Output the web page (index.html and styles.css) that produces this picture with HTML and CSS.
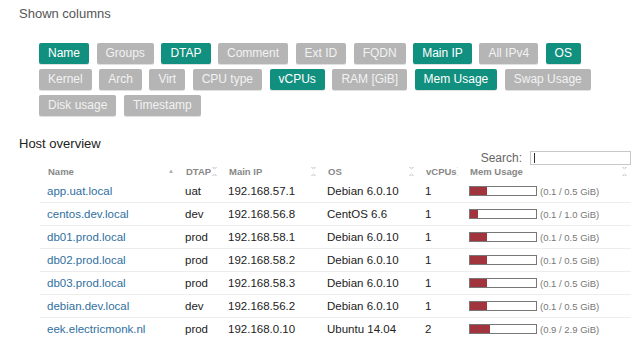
FILE: index.html
```html
<!DOCTYPE html>
<html lang="en">
<head>
    <meta charset="UTF-8">
    <title>Host overview</title>
    <link rel="stylesheet" href="styles.css">
</head>
<body>
<h2 class="section-title">Shown columns</h2>
<div class="col-toggles">
    <span class="toggle on">Name</span>
    <span class="toggle">Groups</span>
    <span class="toggle on">DTAP</span>
    <span class="toggle">Comment</span>
    <span class="toggle">Ext ID</span>
    <span class="toggle">FQDN</span>
    <span class="toggle on">Main IP</span>
    <span class="toggle">All IPv4</span>
    <span class="toggle on">OS</span>
    <span class="toggle">Kernel</span>
    <span class="toggle">Arch</span>
    <span class="toggle">Virt</span>
    <span class="toggle">CPU type</span>
    <span class="toggle on">vCPUs</span>
    <span class="toggle">RAM [GiB]</span>
    <span class="toggle on">Mem Usage</span>
    <span class="toggle">Swap Usage</span>
    <span class="toggle">Disk usage</span>
    <span class="toggle">Timestamp</span>
</div>

<h2 class="section-title host-title">Host overview</h2>
<div class="search-row">
    <label for="search">Search:</label>
    <span class="search-box"><input id="search" type="text"></span>
</div>
<table class="hosts">
    <colgroup>
        <col class="c-name">
        <col class="c-dtap">
        <col class="c-ip">
        <col class="c-os">
        <col class="c-cpu">
        <col class="c-mem">
    </colgroup>
    <thead>
        <tr>
            <th><div class="th-in">Name <span class="sort asc">&#9650;</span></div></th>
            <th><div class="th-in">DTAP <span class="sort both"></span></div></th>
            <th><div class="th-in">Main IP <span class="sort both"></span></div></th>
            <th><div class="th-in">OS <span class="sort both"></span></div></th>
            <th><div class="th-in">vCPUs <span class="sort both"></span></div></th>
            <th><div class="th-in">Mem Usage <span class="sort both"></span></div></th>
        </tr>
    </thead>
    <tbody>
        <tr>
            <td><a href="#">app.uat.local</a></td><td>uat</td><td>192.168.57.1</td><td>Debian 6.0.10</td><td>1</td>
            <td><span class="bar"><span class="fill" style="width: 25%"></span></span><span class="mem-txt">(0.1 / 0.5 GiB)</span></td>
        </tr>
        <tr>
            <td><a href="#">centos.dev.local</a></td><td>dev</td><td>192.168.56.8</td><td>CentOS 6.6</td><td>1</td>
            <td><span class="bar"><span class="fill" style="width: 12%"></span></span><span class="mem-txt">(0.1 / 1.0 GiB)</span></td>
        </tr>
        <tr>
            <td><a href="#">db01.prod.local</a></td><td>prod</td><td>192.168.58.1</td><td>Debian 6.0.10</td><td>1</td>
            <td><span class="bar"><span class="fill" style="width: 25%"></span></span><span class="mem-txt">(0.1 / 0.5 GiB)</span></td>
        </tr>
        <tr>
            <td><a href="#">db02.prod.local</a></td><td>prod</td><td>192.168.58.2</td><td>Debian 6.0.10</td><td>1</td>
            <td><span class="bar"><span class="fill" style="width: 25%"></span></span><span class="mem-txt">(0.1 / 0.5 GiB)</span></td>
        </tr>
        <tr>
            <td><a href="#">db03.prod.local</a></td><td>prod</td><td>192.168.58.3</td><td>Debian 6.0.10</td><td>1</td>
            <td><span class="bar"><span class="fill" style="width: 25%"></span></span><span class="mem-txt">(0.1 / 0.5 GiB)</span></td>
        </tr>
        <tr>
            <td><a href="#">debian.dev.local</a></td><td>dev</td><td>192.168.56.2</td><td>Debian 6.0.10</td><td>1</td>
            <td><span class="bar"><span class="fill" style="width: 25%"></span></span><span class="mem-txt">(0.1 / 0.5 GiB)</span></td>
        </tr>
        <tr>
            <td><a href="#">eek.electricmonk.nl</a></td><td>prod</td><td>192.168.0.10</td><td>Ubuntu 14.04</td><td>2</td>
            <td><span class="bar"><span class="fill" style="width: 31%"></span></span><span class="mem-txt">(0.9 / 2.9 GiB)</span></td>
        </tr>
    </tbody>
</table>
</body>
</html>
```

FILE: styles.css
```css
body {
    margin: 0;
    font-family: "Liberation Sans", Arial, sans-serif;
    color: #222;
    background: #fff;
    overflow: hidden;
}

.section-title {
    margin: 6px 0 0 19px;
    font-size: 13px;
    font-weight: normal;
    line-height: 16px;
    color: #555;
}

.host-title {
    margin-top: 21px;
    line-height: 14px;
    color: #222;
}

/* column toggle buttons */
.col-toggles {
    display: flex;
    flex-wrap: wrap;
    gap: 5px 7.5px;
    width: 570px;
    margin: 21px 0 0 39px;
}

.toggle {
    display: block;
    height: 21px;
    line-height: 21px;
    padding: 0 9px;
    font-size: 12px;
    color: #f2f2f2;
    background: #b5b5b5;
    border-radius: 2px;
    box-shadow: 0 1px 0 rgba(0, 0, 0, 0.12);
}

.toggle.on {
    color: #fff;
    background: #12907f;
}

/* search */
.search-row {
    display: flex;
    justify-content: flex-end;
    align-items: center;
    gap: 8px;
    width: 631px;
    height: 14px;
    font-size: 12px;
    color: #666;
}

.search-row label {
    line-height: 14px;
}

.search-box {
    display: block;
    position: relative;
}

.search-box input {
    display: block;
    box-sizing: border-box;
    width: 101px;
    height: 14px;
    margin: 0;
    padding: 0;
    border: 1px solid #c8c8c8;
    outline: none;
}

.search-box::after {
    content: "";
    position: absolute;
    left: 4px;
    top: 2px;
    width: 1px;
    height: 10px;
    background: #333;
}

/* host table */
.hosts {
    margin-left: 40px;
    width: 591px;
    border-collapse: collapse;
    table-layout: fixed;
    font-size: 11.5px;
}

.c-name { width: 138px; }
.c-dtap { width: 43px; }
.c-ip { width: 99px; }
.c-os { width: 98px; }
.c-cpu { width: 44px; }
.c-mem { width: 169px; }

.hosts th {
    height: 12px;
    padding: 0 4px 2px 8px;
    font-size: 9.5px;
    font-weight: bold;
    color: #888;
    text-align: left;
    vertical-align: bottom;
}

.th-in {
    display: flex;
    justify-content: space-between;
    align-items: center;
    line-height: 11px;
    white-space: nowrap;
}

.sort {
    display: block;
    font-size: 6px;
    color: #aaa;
}

.sort.both {
    width: 5px;
    height: 9px;
    background:
        linear-gradient(to top right, transparent 50%, #ddd 50%) 0 0 / 2.5px 3px no-repeat,
        linear-gradient(to top left, transparent 50%, #ddd 50%) 2.5px 0 / 2.5px 3px no-repeat,
        linear-gradient(to bottom right, transparent 50%, #ddd 50%) 0 6px / 2.5px 3px no-repeat,
        linear-gradient(to bottom left, transparent 50%, #ddd 50%) 2.5px 6px / 2.5px 3px no-repeat;
}

.hosts td {
    height: 22px;
    padding: 0 0 0 7px;
    border-top: 1px solid #ededed;
    white-space: nowrap;
}

.hosts tbody tr:first-child td {
    border-top: none;
    height: 23px;
}

.hosts a {
    color: #2f6f9f;
    text-decoration: none;
}

.bar {
    display: inline-block;
    box-sizing: border-box;
    width: 68px;
    height: 10px;
    vertical-align: -1px;
    border: 1px solid #777;
    background: #fff;
}

.fill {
    display: block;
    height: 100%;
    background: #a1343d;
}

.mem-txt {
    margin-left: 3px;
    font-size: 9.5px;
    color: #777;
}
```
